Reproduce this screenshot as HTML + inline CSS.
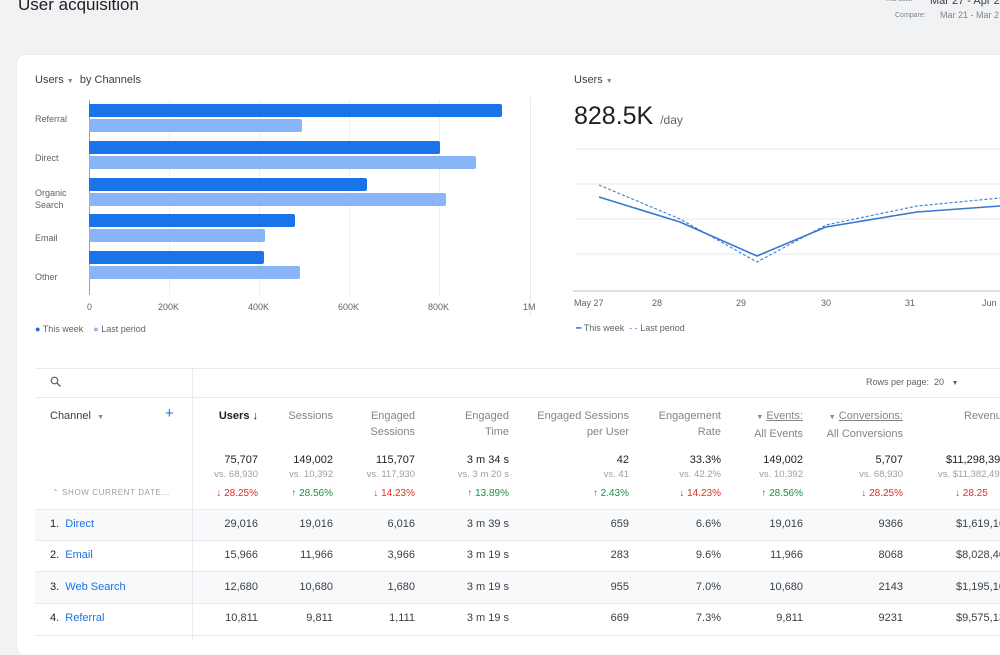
<!DOCTYPE html>
<html><head><style>
*{margin:0;padding:0;box-sizing:border-box}
body{width:1000px;height:640px;overflow:hidden;background:#f1f2f4;font-family:"Liberation Sans",Arial,sans-serif;position:relative;color:#3c4043}
.a{position:absolute;white-space:nowrap}
.card{position:absolute;left:17px;top:55px;width:1000px;height:600px;background:#fff;border-radius:8px;box-shadow:0 0 2px rgba(0,0,0,.08)}
.lbl{font-size:9px;color:#5f6368}
.bar{position:absolute;left:89px;height:13px;border-radius:0 2px 2px 0}
.d{background:#1a73e8}.l{background:#8ab4f8}
.h{font-size:11px;color:#80868b;text-align:right;line-height:16px}
.t{font-size:11px;color:#202124;text-align:right}
.v{font-size:9.5px;color:#9aa0a6;text-align:right}
.r{font-size:10px;color:#d93025;text-align:right}
.g{font-size:10px;color:#1e8e3e;text-align:right}
.c{font-size:11px;color:#3c4043;text-align:right}
.hl{position:absolute;left:35px;width:965px;height:1px;background:#e8eaed}
.row{position:absolute;left:35px;width:965px;height:31px;background:#f8f9fb}
.nm{font-size:11px;color:#202124}
.nm b{font-weight:normal;color:#1a73e8}
</style></head><body>
<div class="a" style="left:18px;top:-5px;font-size:17px;color:#202124">User acquisition</div>
<div class="a" style="left:885px;top:-3px;font-size:6px;color:#5f6368">This week</div>
<div class="a" style="left:930px;top:-5px;font-size:11px;color:#3c4043">Mar 27 - Apr 2</div>
<div class="a" style="left:895px;top:12px;font-size:7px;color:#80868b">Compare:</div>
<div class="a" style="left:940px;top:10px;font-size:9px;color:#80868b">Mar 21 - Mar 2</div>
<div class="card"></div>
<div class="a" style="left:35px;top:74px;font-size:11px;color:#3c4043">Users <span style="font-size:7px;color:#80868b">▼</span>&nbsp; by Channels</div>
<!-- gridlines -->
<div class="a" style="left:169px;top:100px;width:1px;height:195px;background:#eceef0"></div>
<div class="a" style="left:259px;top:100px;width:1px;height:195px;background:#eceef0"></div>
<div class="a" style="left:349px;top:100px;width:1px;height:195px;background:#eceef0"></div>
<div class="a" style="left:439px;top:100px;width:1px;height:195px;background:#eceef0"></div>
<div class="a" style="left:89px;top:100px;width:1px;height:195px;background:#9aa0a6"></div>
<div class="a" style="left:530px;top:97px;width:1px;height:218px;background:#e8eaed"></div>
<div class="bar d" style="top:104px;width:413px"></div><div class="bar l" style="top:119px;width:213px"></div>
<div class="bar d" style="top:141px;width:351px"></div><div class="bar l" style="top:156px;width:387px"></div>
<div class="bar d" style="top:178px;width:278px"></div><div class="bar l" style="top:193px;width:357px"></div>
<div class="bar d" style="top:214px;width:206px"></div><div class="bar l" style="top:229px;width:176px"></div>
<div class="bar d" style="top:251px;width:175px"></div><div class="bar l" style="top:266px;width:211px"></div>
<div class="a lbl" style="left:35px;top:114px">Referral</div>
<div class="a lbl" style="left:35px;top:153px">Direct</div>
<div class="a lbl" style="left:35px;top:187px;line-height:12px">Organic<br>Search</div>
<div class="a lbl" style="left:35px;top:233px">Email</div>
<div class="a lbl" style="left:35px;top:272px">Other</div>
<div class="a lbl" style="left:87px;top:302px">0</div>
<div class="a lbl" style="left:158px;top:302px">200K</div>
<div class="a lbl" style="left:248px;top:302px">400K</div>
<div class="a lbl" style="left:338px;top:302px">600K</div>
<div class="a lbl" style="left:428px;top:302px">800K</div>
<div class="a lbl" style="left:523px;top:302px">1M</div>
<div class="a lbl" style="left:35px;top:324px"><span style="color:#1967d2">●</span> This week &nbsp;&nbsp;&nbsp;<span style="color:#8ab4f8">●</span> Last period</div>
<!-- line chart -->
<div class="a" style="left:574px;top:74px;font-size:11px;color:#3c4043">Users <span style="font-size:7px;color:#80868b">▼</span></div>
<div class="a" style="left:574px;top:102px;font-size:25px;color:#202124">828.5K <span style="font-size:12px;color:#5f6368">/day</span></div>
<svg class="a" style="left:560px;top:140px" width="440" height="160">
<g stroke="#e8eaed" stroke-width="1"><line x1="15" y1="9" x2="440" y2="9"/><line x1="15" y1="44" x2="440" y2="44"/><line x1="15" y1="79" x2="440" y2="79"/><line x1="15" y1="114" x2="440" y2="114"/></g>
<line x1="13" y1="151" x2="440" y2="151" stroke="#bdc1c6"/>
<polyline points="39,45 120,79 197,122 266,85 357,66 440,58" fill="none" stroke="#4a86d8" stroke-width="1.2" stroke-dasharray="3,2"/>
<polyline points="39,57 120,82 197,116 266,87 357,72 440,66" fill="none" stroke="#3a78d0" stroke-width="1.6"/>
</svg>
<div class="a lbl" style="left:574px;top:298px">May 27</div>
<div class="a lbl" style="left:652px;top:298px">28</div>
<div class="a lbl" style="left:736px;top:298px">29</div>
<div class="a lbl" style="left:821px;top:298px">30</div>
<div class="a lbl" style="left:905px;top:298px">31</div>
<div class="a lbl" style="left:982px;top:298px">Jun</div>
<div class="a lbl" style="left:576px;top:323px"><span style="color:#3a78d0">━</span> This week &nbsp;<span style="color:#3a78d0">- -</span> Last period</div>
<!-- table -->
<div class="hl" style="top:368px"></div>
<div class="hl" style="top:397px"></div>
<svg class="a" style="left:50px;top:376px" width="12" height="12"><circle cx="4.5" cy="4.5" r="3.3" fill="none" stroke="#5f6368" stroke-width="1.2"/><line x1="7" y1="7" x2="10.5" y2="10.5" stroke="#5f6368" stroke-width="1.3"/></svg>
<div class="a" style="left:866px;top:377px;font-size:9px;color:#5f6368">Rows per page: &nbsp;20 &nbsp;&nbsp;<span style="font-size:7px">▼</span></div>
<div class="row" style="top:509px"></div>
<div class="row" style="top:572px"></div>
<div class="hl" style="top:509px"></div><div class="hl" style="top:540px"></div><div class="hl" style="top:571px"></div><div class="hl" style="top:603px"></div><div class="hl" style="top:635px"></div>
<div class="a" style="left:192px;top:368px;width:1px;height:272px;background:#e8eaed"></div>
<div class="a" style="left:50px;top:410px;font-size:11px;color:#3c4043">Channel &nbsp;<span style="font-size:7px;color:#80868b">▼</span></div>
<div class="a" style="left:165px;top:405px;font-size:15px;color:#1a73e8">+</div>
<div class="a" style="left:52px;top:488px;font-size:8px;color:#9aa0a6;letter-spacing:.6px">⌃ SHOW CURRENT DATE...</div>
<!-- columns: right edges -->
<div class="a h" style="right:742px;top:408px;color:#202124;font-weight:bold">Users ↓</div>
<div class="a h" style="right:667px;top:408px">Sessions</div>
<div class="a h" style="right:585px;top:408px">Engaged<br>Sessions</div>
<div class="a h" style="right:491px;top:408px">Engaged<br>Time</div>
<div class="a h" style="right:371px;top:408px">Engaged Sessions<br>per User</div>
<div class="a h" style="right:279px;top:408px">Engagement<br>Rate</div>
<div class="a h" style="right:197px;top:408px"><span style="font-size:7px">▼</span> <u>Events:</u><br>All Events</div>
<div class="a h" style="right:97px;top:408px"><span style="font-size:7px">▼</span> <u>Conversions:</u><br>All Conversions</div>
<div class="a h" style="left:964px;top:408px;text-align:left">Revenue</div>

<div class="a t" style="right:742px;top:454px">75,707</div><div class="a v" style="right:742px;top:469px">vs. 68,930</div><div class="a r" style="right:742px;top:488px">↓ 28.25%</div>
<div class="a t" style="right:667px;top:454px">149,002</div><div class="a v" style="right:667px;top:469px">vs. 10,392</div><div class="a g" style="right:667px;top:488px">↑ 28.56%</div>
<div class="a t" style="right:585px;top:454px">115,707</div><div class="a v" style="right:585px;top:469px">vs. 117,930</div><div class="a r" style="right:585px;top:488px">↓ 14.23%</div>
<div class="a t" style="right:491px;top:454px">3 m 34 s</div><div class="a v" style="right:491px;top:469px">vs. 3 m 20 s</div><div class="a g" style="right:491px;top:488px">↑ 13.89%</div>
<div class="a t" style="right:371px;top:454px">42</div><div class="a v" style="right:371px;top:469px">vs. 41</div><div class="a g" style="right:371px;top:488px">↑ 2.43%</div>
<div class="a t" style="right:279px;top:454px">33.3%</div><div class="a v" style="right:279px;top:469px">vs. 42.2%</div><div class="a r" style="right:279px;top:488px">↓ 14.23%</div>
<div class="a t" style="right:197px;top:454px">149,002</div><div class="a v" style="right:197px;top:469px">vs. 10,392</div><div class="a g" style="right:197px;top:488px">↑ 28.56%</div>
<div class="a t" style="right:97px;top:454px">5,707</div><div class="a v" style="right:97px;top:469px">vs. 68,930</div><div class="a r" style="right:97px;top:488px">↓ 28.25%</div>
<div class="a t" style="left:946px;top:454px;text-align:left">$11,298,39</div><div class="a v" style="left:938px;top:469px;text-align:left">vs. $11,382,49</div><div class="a r" style="left:955px;top:488px;text-align:left">↓ 28.25</div>

<div class="a nm" style="left:50px;top:518px">1.&nbsp; <b>Direct</b></div>
<div class="a nm" style="left:50px;top:549px">2.&nbsp; <b>Email</b></div>
<div class="a nm" style="left:50px;top:581px">3.&nbsp; <b>Web Search</b></div>
<div class="a nm" style="left:50px;top:612px">4.&nbsp; <b>Referral</b></div>

<div class="a c" style="right:742px;top:518px">29,016</div><div class="a c" style="right:667px;top:518px">19,016</div><div class="a c" style="right:585px;top:518px">6,016</div><div class="a c" style="right:491px;top:518px">3 m 39 s</div><div class="a c" style="right:371px;top:518px">659</div><div class="a c" style="right:279px;top:518px">6.6%</div><div class="a c" style="right:197px;top:518px">19,016</div><div class="a c" style="right:97px;top:518px">9366</div><div class="a c" style="left:956px;top:518px;text-align:left">$1,619,16</div>
<div class="a c" style="right:742px;top:549px">15,966</div><div class="a c" style="right:667px;top:549px">11,966</div><div class="a c" style="right:585px;top:549px">3,966</div><div class="a c" style="right:491px;top:549px">3 m 19 s</div><div class="a c" style="right:371px;top:549px">283</div><div class="a c" style="right:279px;top:549px">9.6%</div><div class="a c" style="right:197px;top:549px">11,966</div><div class="a c" style="right:97px;top:549px">8068</div><div class="a c" style="left:956px;top:549px;text-align:left">$8,028,40</div>
<div class="a c" style="right:742px;top:581px">12,680</div><div class="a c" style="right:667px;top:581px">10,680</div><div class="a c" style="right:585px;top:581px">1,680</div><div class="a c" style="right:491px;top:581px">3 m 19 s</div><div class="a c" style="right:371px;top:581px">955</div><div class="a c" style="right:279px;top:581px">7.0%</div><div class="a c" style="right:197px;top:581px">10,680</div><div class="a c" style="right:97px;top:581px">2143</div><div class="a c" style="left:956px;top:581px;text-align:left">$1,195,10</div>
<div class="a c" style="right:742px;top:612px">10,811</div><div class="a c" style="right:667px;top:612px">9,811</div><div class="a c" style="right:585px;top:612px">1,111</div><div class="a c" style="right:491px;top:612px">3 m 19 s</div><div class="a c" style="right:371px;top:612px">669</div><div class="a c" style="right:279px;top:612px">7.3%</div><div class="a c" style="right:197px;top:612px">9,811</div><div class="a c" style="right:97px;top:612px">9231</div><div class="a c" style="left:956px;top:612px;text-align:left">$9,575,13</div>
</body></html>
